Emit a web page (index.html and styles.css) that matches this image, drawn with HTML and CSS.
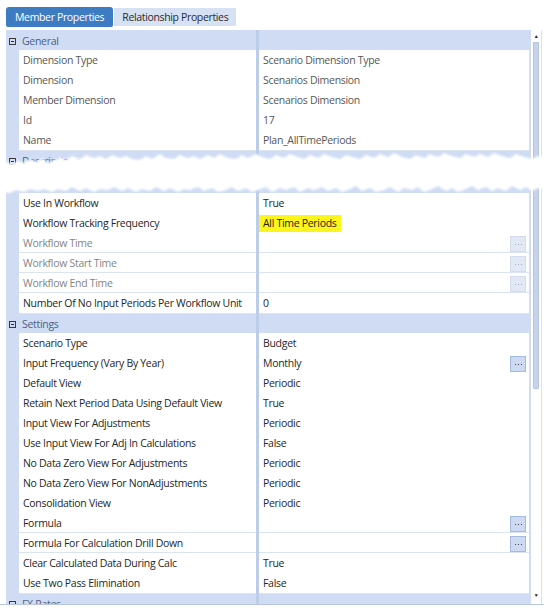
FILE: index.html
```html
<!DOCTYPE html>
<html lang="en">
<head>
    <meta charset="UTF-8">
    <title>Member Properties</title>
    <link rel="stylesheet" href="styles.css">
</head>
<body>
    <div class="tabs">
        <div class="tab active">Member Properties</div>
        <div class="tab">Relationship Properties</div>
    </div>

    <div class="viewer">
        <div class="frame">
            <!-- upper part of the property list -->
            <div class="grid grid-top">
                <div class="row head"><div class="label"><span class="toggle"></span>General</div><div class="sep"></div><div></div></div>
                <div class="row ro"><div class="name">Dimension Type</div><div class="sep"></div><div class="value">Scenario Dimension Type</div></div>
                <div class="row ro"><div class="name">Dimension</div><div class="sep"></div><div class="value">Scenarios Dimension</div></div>
                <div class="row ro"><div class="name">Member Dimension</div><div class="sep"></div><div class="value">Scenarios Dimension</div></div>
                <div class="row ro"><div class="name">Id</div><div class="sep"></div><div class="value">17</div></div>
                <div class="row ro"><div class="name">Name</div><div class="sep"></div><div class="value">Plan_AllTimePeriods</div></div>
                <div class="row head"><div class="label"><span class="toggle"></span>Descriptions</div><div class="sep"></div><div></div></div>
                <div class="row"><div class="name"></div><div class="sep"></div><div class="value"></div></div>
            </div>

            <!-- lower part, after the cut -->
            <div class="grid grid-bottom">
                <div class="row head"><div class="label"></div><div class="sep"></div><div></div></div>
                <div class="row"><div class="name">Use In Workflow</div><div class="sep"></div><div class="value">True</div></div>
                <div class="row"><div class="name">Workflow Tracking Frequency</div><div class="sep"></div><div class="value"><span class="mark">All Time Periods</span></div></div>
                <div class="row off"><div class="name">Workflow Time</div><div class="sep"></div><div class="value"><span class="more"></span></div></div>
                <div class="row off"><div class="name">Workflow Start Time</div><div class="sep"></div><div class="value"><span class="more"></span></div></div>
                <div class="row off"><div class="name">Workflow End Time</div><div class="sep"></div><div class="value"><span class="more"></span></div></div>
                <div class="row"><div class="name">Number Of No Input Periods Per Workflow Unit</div><div class="sep"></div><div class="value">0</div></div>
                <div class="row head"><div class="label"><span class="toggle"></span>Settings</div><div class="sep"></div><div></div></div>
                <div class="row"><div class="name">Scenario Type</div><div class="sep"></div><div class="value">Budget</div></div>
                <div class="row"><div class="name">Input Frequency (Vary By Year)</div><div class="sep"></div><div class="value">Monthly<span class="more on"></span></div></div>
                <div class="row"><div class="name">Default View</div><div class="sep"></div><div class="value">Periodic</div></div>
                <div class="row"><div class="name">Retain Next Period Data Using Default View</div><div class="sep"></div><div class="value">True</div></div>
                <div class="row"><div class="name">Input View For Adjustments</div><div class="sep"></div><div class="value">Periodic</div></div>
                <div class="row"><div class="name">Use Input View For Adj In Calculations</div><div class="sep"></div><div class="value">False</div></div>
                <div class="row"><div class="name">No Data Zero View For Adjustments</div><div class="sep"></div><div class="value">Periodic</div></div>
                <div class="row"><div class="name">No Data Zero View For NonAdjustments</div><div class="sep"></div><div class="value">Periodic</div></div>
                <div class="row"><div class="name">Consolidation View</div><div class="sep"></div><div class="value">Periodic</div></div>
                <div class="row"><div class="name">Formula</div><div class="sep"></div><div class="value"><span class="more on"></span></div></div>
                <div class="row"><div class="name">Formula For Calculation Drill Down</div><div class="sep"></div><div class="value"><span class="more on"></span></div></div>
                <div class="row"><div class="name">Clear Calculated Data During Calc</div><div class="sep"></div><div class="value">True</div></div>
                <div class="row"><div class="name">Use Two Pass Elimination</div><div class="sep"></div><div class="value">False</div></div>
                <div class="row head"><div class="label"><span class="toggle"></span>FX Rates</div><div class="sep"></div><div></div></div>
            </div>
        </div>

        <div class="scrollbar">
            <span class="arrow">&#9650;</span>
            <div class="thumb"></div>
            <span class="arrow down">&#9660;</span>
        </div>

        <!-- torn paper strip across the list -->
        <svg class="tear" width="544" height="48" viewBox="0 0 544 48">
            <defs>
                <filter id="soft" x="-2%" y="-20%" width="104%" height="140%">
                    <feGaussianBlur stdDeviation="0.8"/>
                </filter>
            </defs>
            <path filter="url(#soft)" fill="#ffffff" d="M0 13 L6 12 L12 14 L18 11 L24 13 L30 9 L36 12 L42 8 L48 13 L54 10 L60 7 L66 10 L72 6 L80 9 L86 5 L94 8 L100 6 L106 9 L112 5 L120 8 L126 6 L132 9 L140 10 L146 6 L152 9 L160 4 L166 8 L174 9 L180 5 L188 8 L194 6 L200 9 L208 5 L214 8 L220 4 L228 8 L236 9 L242 5 L248 8 L256 4 L262 7 L270 9 L276 5 L284 8 L290 4 L298 7 L304 9 L310 5 L318 8 L324 4 L332 7 L340 9 L346 5 L352 7 L360 9 L366 5 L374 8 L380 4 L388 7 L394 3 L402 7 L410 9 L416 5 L424 8 L430 4 L438 7 L444 3 L452 6 L460 8 L466 4 L474 7 L480 4 L488 7 L494 3 L502 6 L510 8 L516 4 L524 7 L532 9 L538 6 L544 7 L544 40 L538 38 L532 41 L526 37 L520 40 L512 36 L506 41 L498 38 L492 41 L486 37 L478 40 L472 36 L466 39 L458 42 L452 38 L446 41 L438 36 L432 39 L424 42 L418 37 L412 40 L404 38 L398 42 L390 37 L384 40 L376 42 L370 38 L362 41 L356 36 L350 39 L342 42 L336 38 L328 41 L322 37 L314 40 L308 38 L300 42 L294 37 L286 40 L280 38 L272 42 L266 37 L258 40 L252 42 L246 38 L238 41 L232 37 L226 40 L218 42 L212 38 L204 41 L198 37 L190 40 L184 39 L178 42 L170 38 L164 41 L156 37 L150 41 L142 39 L136 42 L128 38 L122 41 L114 37 L108 40 L100 39 L94 42 L86 38 L80 41 L72 37 L66 41 L58 39 L52 42 L44 39 L38 41 L30 39 L24 42 L16 40 L10 43 L0 42 Z"/>
        </svg>
    </div>
</body>
</html>
```

FILE: styles.css
```css
body {
    margin: 0;
    width: 544px;
    height: 612px;
    overflow: hidden;
    background: #ffffff;
    font-family: "Open Sans", "Noto Sans", sans-serif;
    font-size: 10.5px;
    letter-spacing: -0.3px;
    color: #262626;
}

/* tab strip */
.tabs {
    display: flex;
    align-items: flex-end;
    height: 27px;
    padding-left: 6px;
    margin-bottom: 3px;
}
.tab {
    height: 18px;
    line-height: 18px;
    padding: 0 8px;
    margin-bottom: 1px;
    background: #d6e2f4;
    color: #2b2b2b;
    font-size: 10.5px;
    letter-spacing: -0.35px;
}
.tab.active {
    height: 20px;
    line-height: 20px;
    margin-bottom: 0;
    margin-right: 1px;
    padding: 0 9px;
    background: #3d7cc3;
    color: #ffffff;
    border-radius: 3px 3px 2px 2px;
}

/* property grid */
.viewer {
    position: relative;
    display: flex;
    height: 574px;
    border-bottom: 1px solid #b7c5de;
}
.frame {
    width: 525px;
    margin-left: 6px;
    background: #cfdcf4;
}
.grid {
    overflow: hidden;
}
.grid-top {
    height: 143px;
}
.grid-bottom {
    height: 431px;
}
.row {
    display: grid;
    grid-template-columns: 250px 3px 270px;
    height: 20px;
    line-height: 20px;
}
.name {
    margin-left: 13px;
    padding-left: 4px;
    background: #ffffff;
    border-bottom: 1px solid #dbe4f3;
    white-space: nowrap;
    overflow: hidden;
}
.value {
    position: relative;
    padding-left: 4px;
    background: #ffffff;
    border-bottom: 1px solid #dbe4f3;
    white-space: nowrap;
}
.sep {
    background: #bccdea;
}
.ro .name,
.ro .value {
    color: #575757;
}
.off .name {
    color: #858585;
}
.head .label {
    display: flex;
    align-items: center;
    padding: 1px 0 0 3px;
    color: #4e5f7e;
}
.toggle {
    position: relative;
    width: 7px;
    height: 7px;
    margin-right: 6px;
    border: 1px solid #3a3a3a;
    box-sizing: border-box;
}
.toggle::after {
    content: "";
    position: absolute;
    left: 1px;
    right: 1px;
    top: 2px;
    height: 1px;
    background: #2a2a2a;
}

.mark {
    display: inline-block;
    margin-left: -4px;
    margin-top: 2px;
    padding: 0 4px;
    height: 17px;
    line-height: 17px;
    background: #fbf51b;
    color: #1f1f1f;
    vertical-align: top;
}

/* "..." editor button */
.more {
    position: absolute;
    right: 3px;
    top: 3px;
    width: 14px;
    height: 14px;
    background: #e2e9f5;
    border: 1px solid #d2dcee;
}
.more::before {
    content: "";
    position: absolute;
    left: 4px;
    top: 7px;
    width: 7px;
    height: 1px;
    background: repeating-linear-gradient(90deg, #a3abbb 0 1px, transparent 1px 3px);
}
.more.on {
    background: #cddaf1;
    border-color: #a4b9df;
}
.more.on::before {
    background: repeating-linear-gradient(90deg, #3c465c 0 1px, transparent 1px 3px);
}

/* vertical scroller */
.scrollbar {
    display: flex;
    flex-direction: column;
    align-items: center;
    width: 10px;
    border-right: 1px solid #dbe1ec;
}
.arrow {
    font-size: 5px;
    line-height: 6px;
    margin-top: 3px;
    color: #222222;
}
.arrow.down {
    margin-top: auto;
    margin-bottom: 6px;
}
.thumb {
    width: 4px;
    height: 345px;
    margin-top: 3px;
    background: #c6d3ea;
    border: 1px solid #b5c4e0;
    border-radius: 1px;
}

.tear {
    position: absolute;
    left: 0;
    top: 120px;
}
```
